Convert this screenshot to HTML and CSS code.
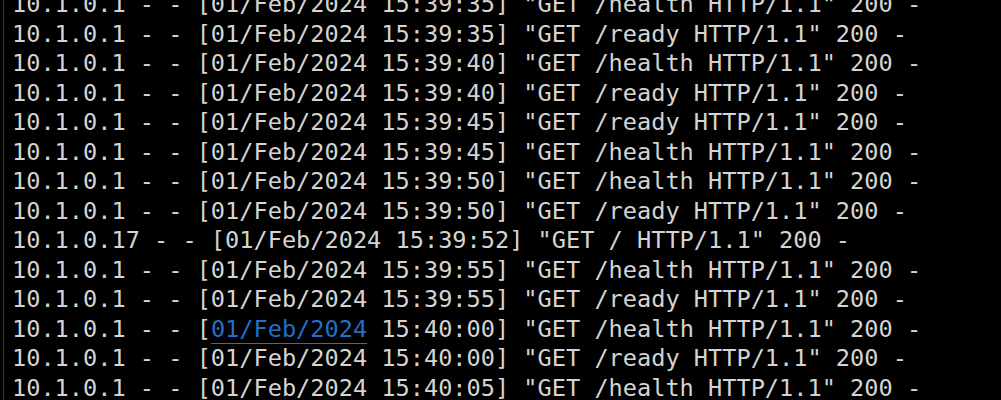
FILE: index.html
```html
<!DOCTYPE html>
<html>
<head>
<meta charset="utf-8">
<link rel="stylesheet" href="styles.css">
</head>
<body>
<div class="term">
<pre class="log">10.1.0.1 - - [01/Feb/2024 15:39:35] "GET /health HTTP/1.1" 200 -
10.1.0.1 - - [01/Feb/2024 15:39:35] "GET /ready HTTP/1.1" 200 -
10.1.0.1 - - [01/Feb/2024 15:39:40] "GET /health HTTP/1.1" 200 -
10.1.0.1 - - [01/Feb/2024 15:39:40] "GET /ready HTTP/1.1" 200 -
10.1.0.1 - - [01/Feb/2024 15:39:45] "GET /ready HTTP/1.1" 200 -
10.1.0.1 - - [01/Feb/2024 15:39:45] "GET /health HTTP/1.1" 200 -
10.1.0.1 - - [01/Feb/2024 15:39:50] "GET /health HTTP/1.1" 200 -
10.1.0.1 - - [01/Feb/2024 15:39:50] "GET /ready HTTP/1.1" 200 -
10.1.0.17 - - [01/Feb/2024 15:39:52] "GET / HTTP/1.1" 200 -
10.1.0.1 - - [01/Feb/2024 15:39:55] "GET /health HTTP/1.1" 200 -
10.1.0.1 - - [01/Feb/2024 15:39:55] "GET /ready HTTP/1.1" 200 -
10.1.0.1 - - [<a class="link">01/Feb/2024</a> 15:40:00] "GET /health HTTP/1.1" 200 -
10.1.0.1 - - [01/Feb/2024 15:40:00] "GET /ready HTTP/1.1" 200 -
10.1.0.1 - - [01/Feb/2024 15:40:05] "GET /health HTTP/1.1" 200 -</pre>
</div>
</body>
</html>
```
FILE: styles.css
```css
html, body {
  margin: 0;
  padding: 0;
  background: #000;
  height: 100%;
  overflow: hidden;
}
.term {
  height: 400px;
  border-left: 1px solid #3a3a3a;
  margin-left: 3px;
  padding-left: 8px;
  overflow: hidden;
}
.log {
  margin: -10px 0 0 0;
  font-family: "DejaVu Sans Mono", monospace;
  font-size: 23.6px;
  line-height: 29.5px;
  color: #d4d4d4;
  white-space: pre;
}
.link {
  color: #2270c8;
  text-decoration: underline;
  text-decoration-color: #2270c8;
  text-decoration-thickness: 1px;
  text-underline-offset: 6px;
}
```
